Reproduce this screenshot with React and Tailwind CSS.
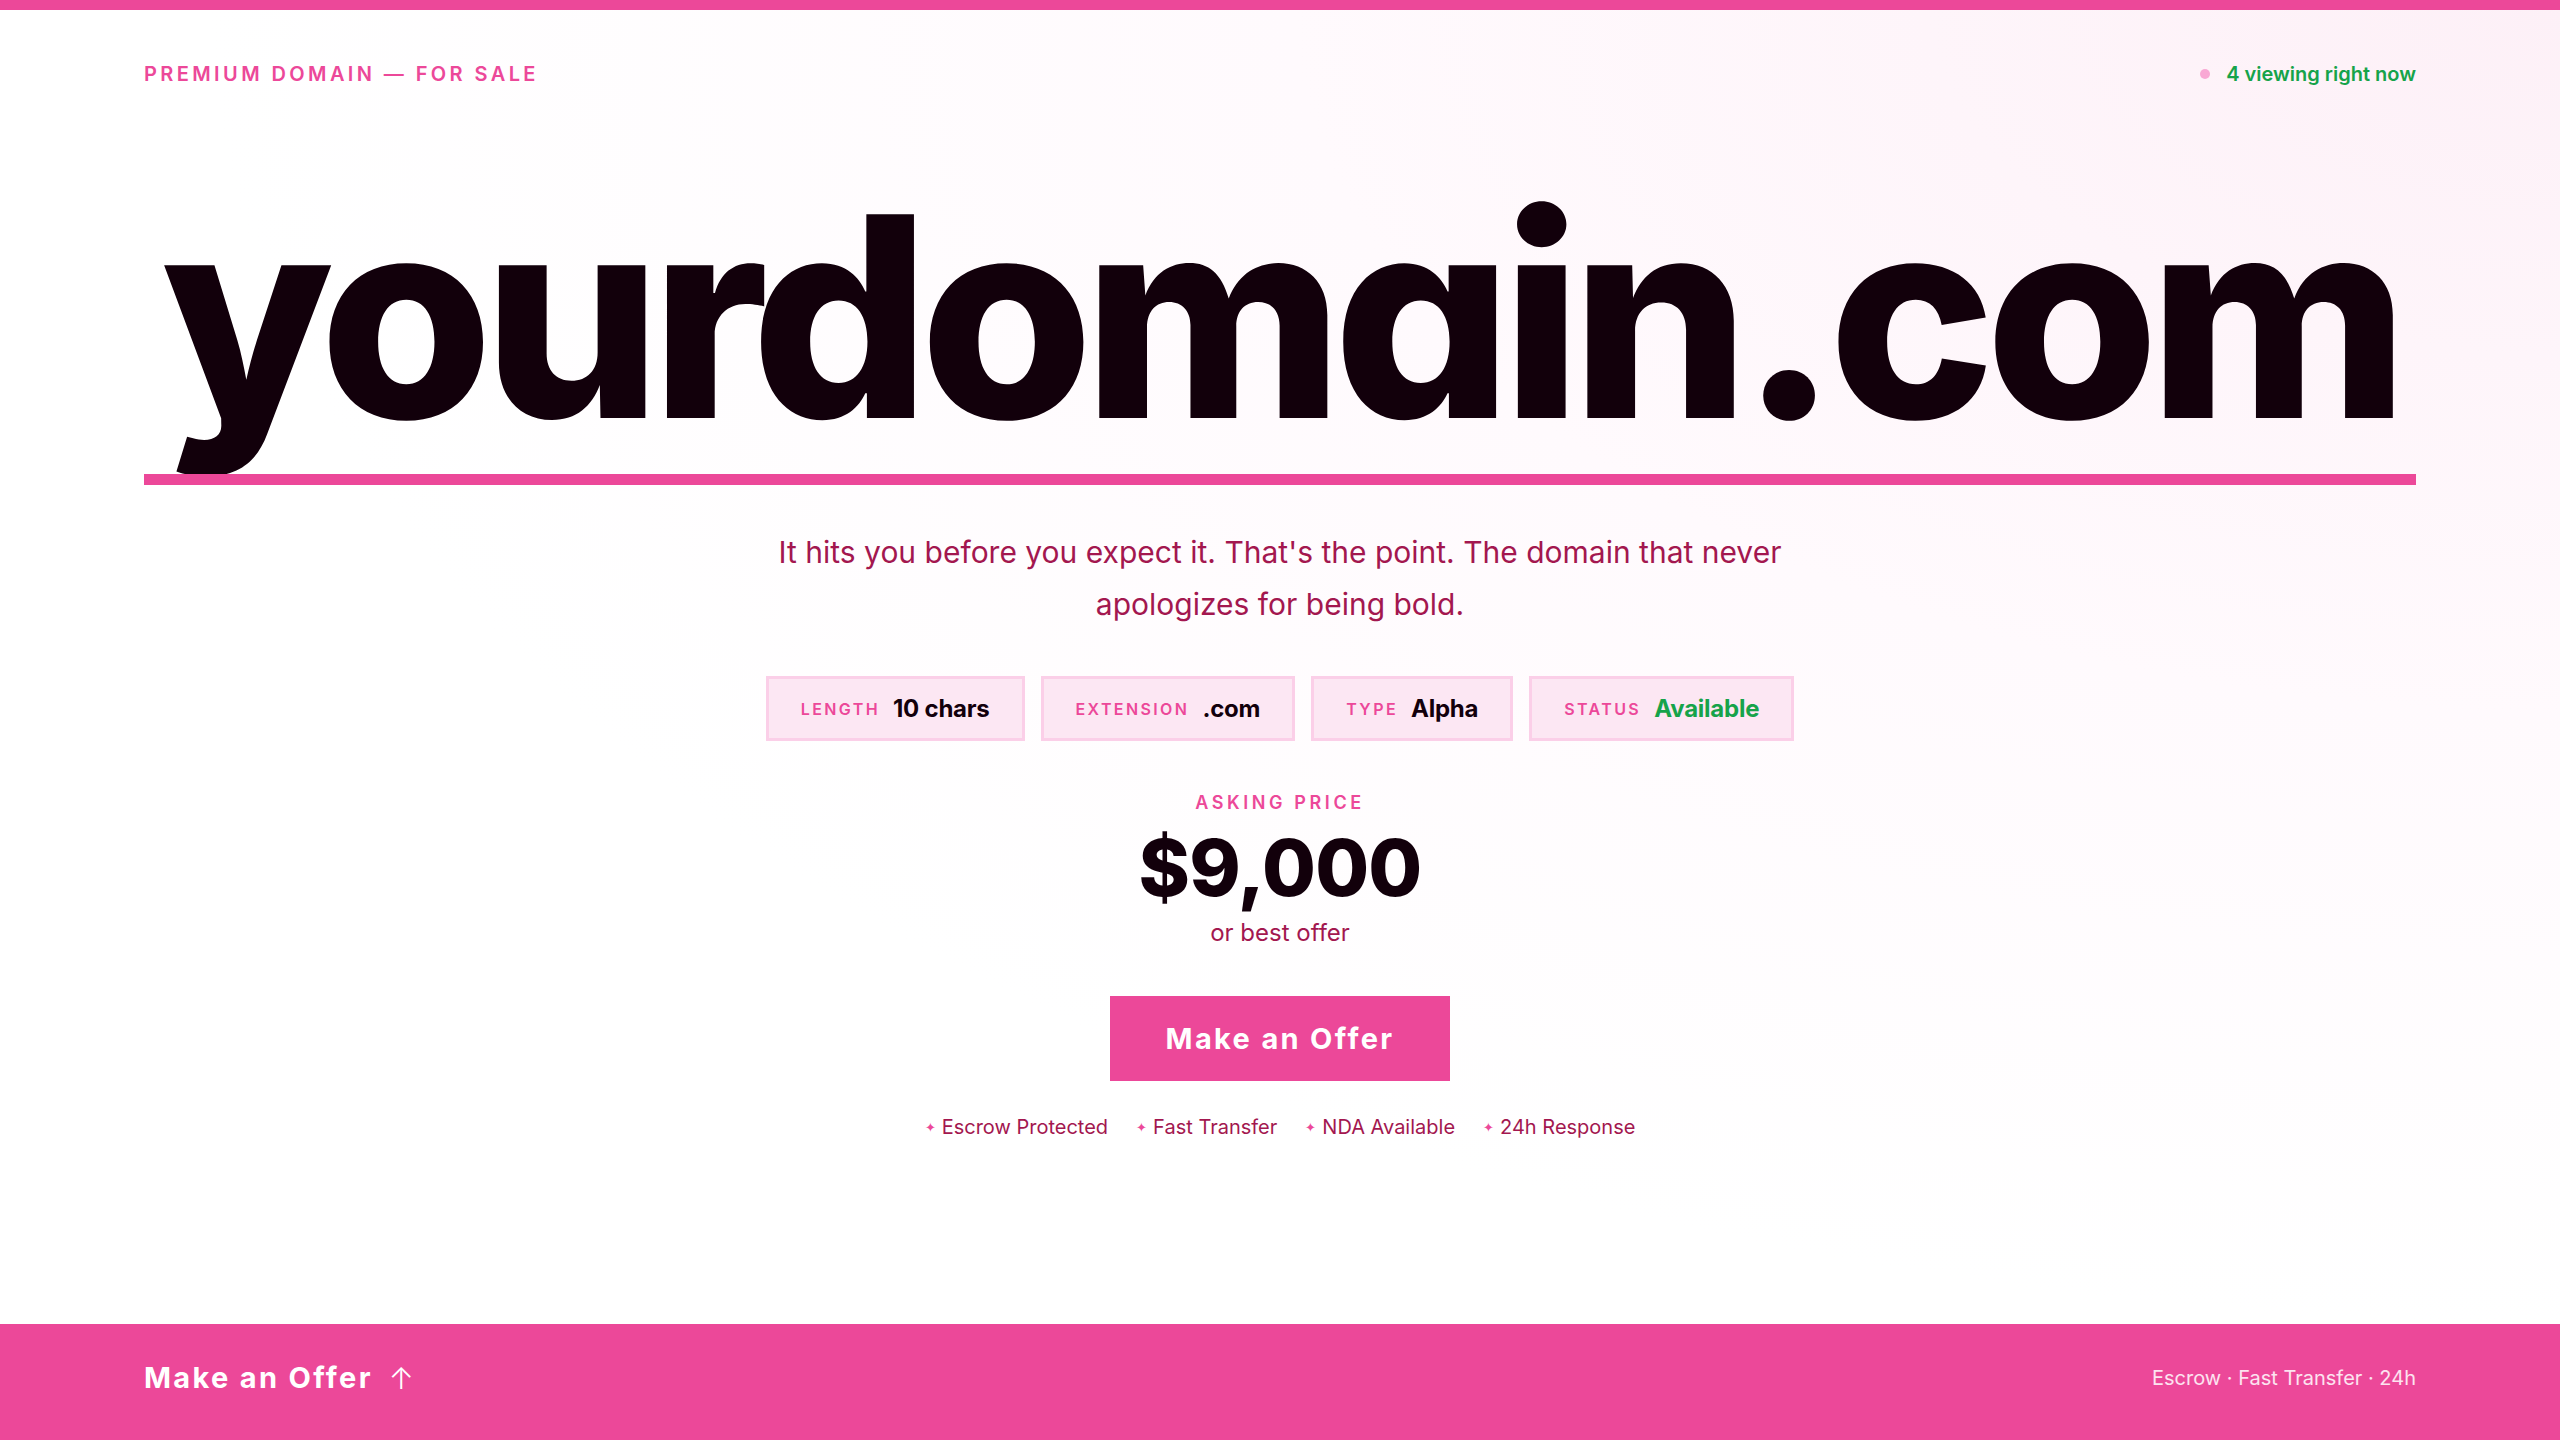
import React from 'react';

const chips = [
  { label: 'Length', value: '10 chars' },
  { label: 'Extension', value: '.com' },
  { label: 'Type', value: 'Alpha' },
  { label: 'Status', value: 'Available', accent: true },
];

const perks = ['Escrow Protected', 'Fast Transfer', 'NDA Available', '24h Response'];

export default function App() {
  return (
    <div className="min-h-screen flex flex-col bg-white bg-[radial-gradient(ellipse_at_top_right,#fdf0f7_0%,#fffafd_35%,#ffffff_65%)] font-['Inter',sans-serif] text-[#12000b]">
      {/* Top accent */}
      <div className="h-[10px] bg-[#ec4899]" />

      {/* Header */}
      <header className="flex items-center justify-between px-[144px] pt-[50px]">
        <div className="text-[20px] leading-[28px] font-semibold uppercase tracking-[0.17em] text-[#ec4899]">
          Premium Domain — For Sale
        </div>
        <div className="flex items-center gap-[16px] text-[20px] leading-[28px] font-semibold text-[#16a34a]">
          <span className="w-[10px] h-[10px] rounded-full bg-[#f9a8d4]" />
          4 viewing right now
        </div>
      </header>

      {/* Main */}
      <main className="flex flex-col items-center px-[144px]">
        <h1 className="mt-[89px] w-full whitespace-nowrap text-center text-[280px] leading-none font-extrabold tracking-[-0.035em] [font-feature-settings:'cv11'] text-[#12000b]">
          yourdomain.com
        </h1>
        <div className="mt-[17px] h-[11px] w-full bg-[#ec4899]" />

        <p className="mt-[41px] max-w-[1040px] text-center text-[30px] leading-[52px] text-[#a3174f]">
          It hits you before you expect it. That's the point. The domain that never apologizes for being bold.
        </p>

        <div className="mt-[46px] flex gap-[16px]">
          {chips.map((c) => (
            <div
              key={c.label}
              className="h-[65px] flex items-center gap-[13px] px-[32px] border-[3px] border-[#fbcfe8] bg-[#fce7f3]"
            >
              <span className="text-[16px] font-semibold uppercase tracking-[0.15em] text-[#ec4899]">{c.label}</span>
              <span className={`text-[24px] font-bold tracking-[-0.01em] ${c.accent ? 'text-[#16a34a]' : 'text-[#12000b]'}`}>{c.value}</span>
            </div>
          ))}
        </div>

        <div className="mt-[50px] text-[18px] leading-[24px] font-semibold uppercase tracking-[0.2em] text-[#ec4899]">
          Asking Price
        </div>
        <div className="mt-[14px] text-[78px] leading-none font-extrabold tracking-[-0.01em]">$9,000</div>
        <div className="mt-[10px] text-[24px] leading-[32px] text-[#a3174f]">or best offer</div>

        <button className="mt-[47px] h-[85px] px-[56px] bg-[#ec4899] text-white text-[29px] font-bold tracking-[0.08em]">
          Make an Offer
        </button>

        <div className="mt-[32px] flex gap-[28px] text-[20px] leading-[28px] text-[#a3174f]">
          {perks.map((p) => (
            <span key={p} className="flex items-center gap-[6px]">
              <span className="text-[13px] text-[#ec4899]">✦</span>
              {p}
            </span>
          ))}
        </div>
      </main>

      {/* Footer bar */}
      <footer className="mt-auto h-[116px] bg-[#ec4899] flex items-center justify-between px-[144px] pb-[8px] text-white">
        <div className="flex items-center gap-[16px] text-[29px] font-bold tracking-[0.08em]">
          Make an Offer
          <span className="font-light text-[30px]">↑</span>
        </div>
        <div className="text-[20px] text-white/85">Escrow · Fast Transfer · 24h</div>
      </footer>
    </div>
  );
}
